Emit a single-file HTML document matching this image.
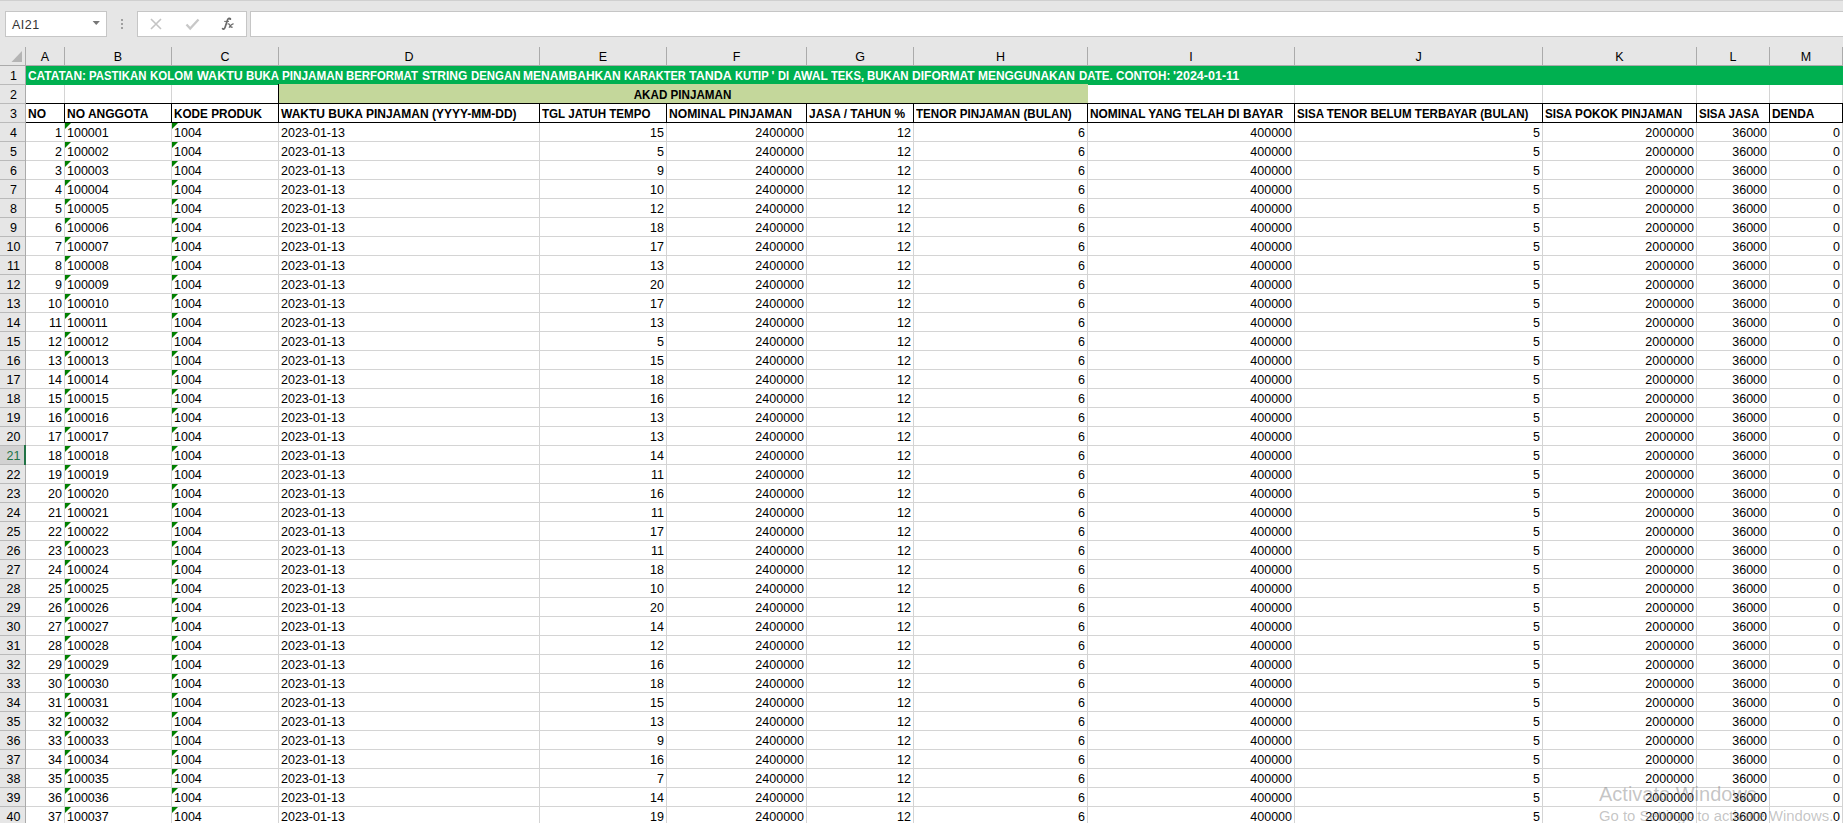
<!DOCTYPE html><html><head><meta charset="utf-8"><style>

*{margin:0;padding:0;box-sizing:border-box}
html,body{width:1843px;height:823px;overflow:hidden;background:#fff;font-family:"Liberation Sans",sans-serif;position:relative}
.a{position:absolute}
.t{position:absolute;white-space:pre;line-height:19px;height:19px;color:#000;font-size:12.5px}
.b{font-weight:bold;font-size:12.0px}
.r{text-align:right}
.c{text-align:center}
.vl{position:absolute;width:1px;background:#d4d4d4}
.hl{position:absolute;height:1px;background:#d4d4d4}
.tri{position:absolute;width:0;height:0;border-top:6px solid #008000;border-right:6px solid transparent}
.rh{position:absolute;left:1px;width:25px;height:19px;line-height:19px;text-align:center;font-size:12.5px;color:#000}
.ch{position:absolute;top:48px;height:18px;line-height:18px;text-align:center;font-size:12.5px;color:#000}

</style></head><body>
<div class="a" style="left:0;top:0;width:1843px;height:65px;background:#e6e6e6"></div>
<div class="a" style="left:0;top:0;width:1843px;height:1px;background:#d0d0d0"></div>
<div class="a" style="left:5px;top:11px;width:102px;height:26px;background:#fff;border:1px solid #c6c6c6"></div>
<div class="t" style="left:12px;top:16px;font-size:12.5px;color:#333;letter-spacing:0.5px">AI21</div>
<svg class="a" style="left:88px;top:16px" width="16" height="14"><path d="M4.6 4.9 L11.9 4.9 L8.25 9.1 Z" fill="#777"/></svg>
<div class="a" style="left:121px;top:19px;width:2px;height:2px;background:#a0a0a0"></div>
<div class="a" style="left:121px;top:23px;width:2px;height:2px;background:#a0a0a0"></div>
<div class="a" style="left:121px;top:27px;width:2px;height:2px;background:#a0a0a0"></div>
<div class="a" style="left:137px;top:11px;width:110px;height:26px;background:#fff;border:1px solid #c6c6c6"></div>
<svg class="a" style="left:150px;top:18px" width="12" height="12" viewBox="0 0 12 12"><path d="M1 1L11 11M11 1L1 11" stroke="#c4c4c4" stroke-width="1.6" fill="none"/></svg>
<svg class="a" style="left:185px;top:18px" width="15" height="13" viewBox="0 0 15 13"><path d="M1.5 6.5L5.2 10.5L13.5 1.5" stroke="#c8c8c8" stroke-width="2.3" fill="none"/></svg>
<svg class="a" style="left:218px;top:14px" width="20" height="20" viewBox="0 0 20 20"><path d="M12.4 5 C11.8 3.9, 10.2 4.1, 9.5 6 L7.1 13.3 C6.6 15, 5.4 15.5, 4.6 14.7" stroke="#6a6a6a" stroke-width="1.7" fill="none" stroke-linecap="round"/><circle cx="12.2" cy="5" r="0.9" fill="#6a6a6a"/><path d="M6.2 7.4 H11" stroke="#6a6a6a" stroke-width="1"/><path d="M9.6 10.3 C10.8 9.5, 11.4 9.9, 12 11.5 C12.5 13, 13 13.5, 14.6 13.2 M15.6 9.9 C14.2 9.8, 12.6 11.4, 11 13.6" stroke="#6a6a6a" stroke-width="1.3" fill="none"/></svg>
<div class="a" style="left:250px;top:11px;width:1600px;height:26px;background:#fff;border:1px solid #c6c6c6"></div>
<div class="a" style="left:0;top:65px;width:1843px;height:1px;background:#ababab"></div>
<svg class="a" style="left:0;top:45px" width="25" height="20"><path d="M11.5 17 L22 17 L22 6 Z" fill="#b4b4b4"/></svg>
<div class="a" style="left:25px;top:47px;width:1px;height:18px;background:#ababab"></div>
<div class="ch" style="left:26px;width:38px">A</div>
<div class="a" style="left:64px;top:47px;width:1px;height:18px;background:#ababab"></div>
<div class="ch" style="left:65px;width:106px">B</div>
<div class="a" style="left:171px;top:47px;width:1px;height:18px;background:#ababab"></div>
<div class="ch" style="left:172px;width:106px">C</div>
<div class="a" style="left:278px;top:47px;width:1px;height:18px;background:#ababab"></div>
<div class="ch" style="left:279px;width:260px">D</div>
<div class="a" style="left:539px;top:47px;width:1px;height:18px;background:#ababab"></div>
<div class="ch" style="left:540px;width:126px">E</div>
<div class="a" style="left:666px;top:47px;width:1px;height:18px;background:#ababab"></div>
<div class="ch" style="left:667px;width:139px">F</div>
<div class="a" style="left:806px;top:47px;width:1px;height:18px;background:#ababab"></div>
<div class="ch" style="left:807px;width:106px">G</div>
<div class="a" style="left:913px;top:47px;width:1px;height:18px;background:#ababab"></div>
<div class="ch" style="left:914px;width:173px">H</div>
<div class="a" style="left:1087px;top:47px;width:1px;height:18px;background:#ababab"></div>
<div class="ch" style="left:1088px;width:206px">I</div>
<div class="a" style="left:1294px;top:47px;width:1px;height:18px;background:#ababab"></div>
<div class="ch" style="left:1295px;width:247px">J</div>
<div class="a" style="left:1542px;top:47px;width:1px;height:18px;background:#ababab"></div>
<div class="ch" style="left:1543px;width:153px">K</div>
<div class="a" style="left:1696px;top:47px;width:1px;height:18px;background:#ababab"></div>
<div class="ch" style="left:1697px;width:72px">L</div>
<div class="a" style="left:1769px;top:47px;width:1px;height:18px;background:#ababab"></div>
<div class="ch" style="left:1770px;width:72px">M</div>
<div class="a" style="left:1842px;top:47px;width:1px;height:18px;background:#ababab"></div>
<div class="a" style="left:0;top:66px;width:25px;height:757px;background:#e6e6e6"></div>
<div class="a" style="left:25px;top:66px;width:1px;height:757px;background:#ababab"></div>
<div class="rh" style="top:67px;color:#000">1</div>
<div class="a" style="left:0;top:84px;width:25px;height:1px;background:#bababa"></div>
<div class="rh" style="top:86px;color:#000">2</div>
<div class="a" style="left:0;top:103px;width:25px;height:1px;background:#bababa"></div>
<div class="rh" style="top:105px;color:#000">3</div>
<div class="a" style="left:0;top:122px;width:25px;height:1px;background:#bababa"></div>
<div class="rh" style="top:124px;color:#000">4</div>
<div class="a" style="left:0;top:141px;width:25px;height:1px;background:#bababa"></div>
<div class="rh" style="top:143px;color:#000">5</div>
<div class="a" style="left:0;top:160px;width:25px;height:1px;background:#bababa"></div>
<div class="rh" style="top:162px;color:#000">6</div>
<div class="a" style="left:0;top:179px;width:25px;height:1px;background:#bababa"></div>
<div class="rh" style="top:181px;color:#000">7</div>
<div class="a" style="left:0;top:198px;width:25px;height:1px;background:#bababa"></div>
<div class="rh" style="top:200px;color:#000">8</div>
<div class="a" style="left:0;top:217px;width:25px;height:1px;background:#bababa"></div>
<div class="rh" style="top:219px;color:#000">9</div>
<div class="a" style="left:0;top:236px;width:25px;height:1px;background:#bababa"></div>
<div class="rh" style="top:238px;color:#000">10</div>
<div class="a" style="left:0;top:255px;width:25px;height:1px;background:#bababa"></div>
<div class="rh" style="top:257px;color:#000">11</div>
<div class="a" style="left:0;top:274px;width:25px;height:1px;background:#bababa"></div>
<div class="rh" style="top:276px;color:#000">12</div>
<div class="a" style="left:0;top:293px;width:25px;height:1px;background:#bababa"></div>
<div class="rh" style="top:295px;color:#000">13</div>
<div class="a" style="left:0;top:312px;width:25px;height:1px;background:#bababa"></div>
<div class="rh" style="top:314px;color:#000">14</div>
<div class="a" style="left:0;top:331px;width:25px;height:1px;background:#bababa"></div>
<div class="rh" style="top:333px;color:#000">15</div>
<div class="a" style="left:0;top:350px;width:25px;height:1px;background:#bababa"></div>
<div class="rh" style="top:352px;color:#000">16</div>
<div class="a" style="left:0;top:369px;width:25px;height:1px;background:#bababa"></div>
<div class="rh" style="top:371px;color:#000">17</div>
<div class="a" style="left:0;top:388px;width:25px;height:1px;background:#bababa"></div>
<div class="rh" style="top:390px;color:#000">18</div>
<div class="a" style="left:0;top:407px;width:25px;height:1px;background:#bababa"></div>
<div class="rh" style="top:409px;color:#000">19</div>
<div class="a" style="left:0;top:426px;width:25px;height:1px;background:#bababa"></div>
<div class="rh" style="top:428px;color:#000">20</div>
<div class="a" style="left:0;top:445px;width:25px;height:1px;background:#bababa"></div>
<div class="rh" style="top:447px;color:#217346">21</div>
<div class="a" style="left:0;top:464px;width:25px;height:1px;background:#bababa"></div>
<div class="rh" style="top:466px;color:#000">22</div>
<div class="a" style="left:0;top:483px;width:25px;height:1px;background:#bababa"></div>
<div class="rh" style="top:485px;color:#000">23</div>
<div class="a" style="left:0;top:502px;width:25px;height:1px;background:#bababa"></div>
<div class="rh" style="top:504px;color:#000">24</div>
<div class="a" style="left:0;top:521px;width:25px;height:1px;background:#bababa"></div>
<div class="rh" style="top:523px;color:#000">25</div>
<div class="a" style="left:0;top:540px;width:25px;height:1px;background:#bababa"></div>
<div class="rh" style="top:542px;color:#000">26</div>
<div class="a" style="left:0;top:559px;width:25px;height:1px;background:#bababa"></div>
<div class="rh" style="top:561px;color:#000">27</div>
<div class="a" style="left:0;top:578px;width:25px;height:1px;background:#bababa"></div>
<div class="rh" style="top:580px;color:#000">28</div>
<div class="a" style="left:0;top:597px;width:25px;height:1px;background:#bababa"></div>
<div class="rh" style="top:599px;color:#000">29</div>
<div class="a" style="left:0;top:616px;width:25px;height:1px;background:#bababa"></div>
<div class="rh" style="top:618px;color:#000">30</div>
<div class="a" style="left:0;top:635px;width:25px;height:1px;background:#bababa"></div>
<div class="rh" style="top:637px;color:#000">31</div>
<div class="a" style="left:0;top:654px;width:25px;height:1px;background:#bababa"></div>
<div class="rh" style="top:656px;color:#000">32</div>
<div class="a" style="left:0;top:673px;width:25px;height:1px;background:#bababa"></div>
<div class="rh" style="top:675px;color:#000">33</div>
<div class="a" style="left:0;top:692px;width:25px;height:1px;background:#bababa"></div>
<div class="rh" style="top:694px;color:#000">34</div>
<div class="a" style="left:0;top:711px;width:25px;height:1px;background:#bababa"></div>
<div class="rh" style="top:713px;color:#000">35</div>
<div class="a" style="left:0;top:730px;width:25px;height:1px;background:#bababa"></div>
<div class="rh" style="top:732px;color:#000">36</div>
<div class="a" style="left:0;top:749px;width:25px;height:1px;background:#bababa"></div>
<div class="rh" style="top:751px;color:#000">37</div>
<div class="a" style="left:0;top:768px;width:25px;height:1px;background:#bababa"></div>
<div class="rh" style="top:770px;color:#000">38</div>
<div class="a" style="left:0;top:787px;width:25px;height:1px;background:#bababa"></div>
<div class="rh" style="top:789px;color:#000">39</div>
<div class="a" style="left:0;top:806px;width:25px;height:1px;background:#bababa"></div>
<div class="rh" style="top:808px;color:#000">40</div>
<div class="a" style="left:0;top:825px;width:25px;height:1px;background:#bababa"></div>
<div class="a" style="left:0;top:446px;width:24px;height:18px;background:#d2d2d2"></div>
<div class="a" style="left:24px;top:445px;width:2px;height:20px;background:#217346"></div>
<div class="rh" style="top:447px;color:#217346">21</div>
<div class="hl" style="left:26px;top:84px;width:1817px"></div>
<div class="hl" style="left:26px;top:103px;width:1817px"></div>
<div class="hl" style="left:26px;top:122px;width:1817px"></div>
<div class="hl" style="left:26px;top:141px;width:1817px"></div>
<div class="hl" style="left:26px;top:160px;width:1817px"></div>
<div class="hl" style="left:26px;top:179px;width:1817px"></div>
<div class="hl" style="left:26px;top:198px;width:1817px"></div>
<div class="hl" style="left:26px;top:217px;width:1817px"></div>
<div class="hl" style="left:26px;top:236px;width:1817px"></div>
<div class="hl" style="left:26px;top:255px;width:1817px"></div>
<div class="hl" style="left:26px;top:274px;width:1817px"></div>
<div class="hl" style="left:26px;top:293px;width:1817px"></div>
<div class="hl" style="left:26px;top:312px;width:1817px"></div>
<div class="hl" style="left:26px;top:331px;width:1817px"></div>
<div class="hl" style="left:26px;top:350px;width:1817px"></div>
<div class="hl" style="left:26px;top:369px;width:1817px"></div>
<div class="hl" style="left:26px;top:388px;width:1817px"></div>
<div class="hl" style="left:26px;top:407px;width:1817px"></div>
<div class="hl" style="left:26px;top:426px;width:1817px"></div>
<div class="hl" style="left:26px;top:445px;width:1817px"></div>
<div class="hl" style="left:26px;top:464px;width:1817px"></div>
<div class="hl" style="left:26px;top:483px;width:1817px"></div>
<div class="hl" style="left:26px;top:502px;width:1817px"></div>
<div class="hl" style="left:26px;top:521px;width:1817px"></div>
<div class="hl" style="left:26px;top:540px;width:1817px"></div>
<div class="hl" style="left:26px;top:559px;width:1817px"></div>
<div class="hl" style="left:26px;top:578px;width:1817px"></div>
<div class="hl" style="left:26px;top:597px;width:1817px"></div>
<div class="hl" style="left:26px;top:616px;width:1817px"></div>
<div class="hl" style="left:26px;top:635px;width:1817px"></div>
<div class="hl" style="left:26px;top:654px;width:1817px"></div>
<div class="hl" style="left:26px;top:673px;width:1817px"></div>
<div class="hl" style="left:26px;top:692px;width:1817px"></div>
<div class="hl" style="left:26px;top:711px;width:1817px"></div>
<div class="hl" style="left:26px;top:730px;width:1817px"></div>
<div class="hl" style="left:26px;top:749px;width:1817px"></div>
<div class="hl" style="left:26px;top:768px;width:1817px"></div>
<div class="hl" style="left:26px;top:787px;width:1817px"></div>
<div class="hl" style="left:26px;top:806px;width:1817px"></div>
<div class="hl" style="left:26px;top:825px;width:1817px"></div>
<div class="vl" style="left:64px;top:66px;height:757px"></div>
<div class="vl" style="left:171px;top:66px;height:757px"></div>
<div class="vl" style="left:278px;top:66px;height:757px"></div>
<div class="vl" style="left:539px;top:66px;height:757px"></div>
<div class="vl" style="left:666px;top:66px;height:757px"></div>
<div class="vl" style="left:806px;top:66px;height:757px"></div>
<div class="vl" style="left:913px;top:66px;height:757px"></div>
<div class="vl" style="left:1087px;top:66px;height:757px"></div>
<div class="vl" style="left:1294px;top:66px;height:757px"></div>
<div class="vl" style="left:1542px;top:66px;height:757px"></div>
<div class="vl" style="left:1696px;top:66px;height:757px"></div>
<div class="vl" style="left:1769px;top:66px;height:757px"></div>
<div class="vl" style="left:1842px;top:66px;height:757px"></div>
<div class="a" style="left:26px;top:66px;width:1817px;height:19px;background:#00b050"></div>
<div class="t b" style="left:28.0px;top:67px;color:#fff;transform:scaleX(0.994);transform-origin:0 0">CATATAN:</div>
<div class="t b" style="left:89.2px;top:67px;color:#fff;transform:scaleX(0.949);transform-origin:0 0">PASTIKAN</div>
<div class="t b" style="left:150.0px;top:67px;color:#fff;transform:scaleX(0.958);transform-origin:0 0">KOLOM</div>
<div class="t b" style="left:196.9px;top:67px;color:#fff;transform:scaleX(1.043);transform-origin:0 0">WAKTU</div>
<div class="t b" style="left:245.5px;top:67px;color:#fff;transform:scaleX(0.952);transform-origin:0 0">BUKA</div>
<div class="t b" style="left:281.9px;top:67px;color:#fff;transform:scaleX(0.975);transform-origin:0 0">PINJAMAN</div>
<div class="t b" style="left:346.4px;top:67px;color:#fff;transform:scaleX(0.949);transform-origin:0 0">BERFORMAT</div>
<div class="t b" style="left:422.0px;top:67px;color:#fff;transform:scaleX(1.001);transform-origin:0 0">STRING</div>
<div class="t b" style="left:470.5px;top:67px;color:#fff;transform:scaleX(0.95);transform-origin:0 0">DENGAN</div>
<div class="t b" style="left:523.3px;top:67px;color:#fff;transform:scaleX(1.004);transform-origin:0 0">MENAMBAHKAN</div>
<div class="t b" style="left:624.4px;top:67px;color:#fff;transform:scaleX(0.918);transform-origin:0 0">KARAKTER</div>
<div class="t b" style="left:688.9px;top:67px;color:#fff;transform:scaleX(1.041);transform-origin:0 0">TANDA</div>
<div class="t b" style="left:734.5px;top:67px;color:#fff;transform:scaleX(0.936);transform-origin:0 0">KUTIP</div>
<div class="t b" style="left:771.5px;top:67px;color:#fff;transform:scaleX(1.0);transform-origin:0 0">'</div>
<div class="t b" style="left:778.2px;top:67px;color:#fff;transform:scaleX(0.925);transform-origin:0 0">DI</div>
<div class="t b" style="left:793.4px;top:67px;color:#fff;transform:scaleX(1.004);transform-origin:0 0">AWAL</div>
<div class="t b" style="left:831.4px;top:67px;color:#fff;transform:scaleX(0.934);transform-origin:0 0">TEKS,</div>
<div class="t b" style="left:867.3px;top:67px;color:#fff;transform:scaleX(0.957);transform-origin:0 0">BUKAN</div>
<div class="t b" style="left:912.2px;top:67px;color:#fff;transform:scaleX(1.004);transform-origin:0 0">DIFORMAT</div>
<div class="t b" style="left:978.3px;top:67px;color:#fff;transform:scaleX(0.996);transform-origin:0 0">MENGGUNAKAN</div>
<div class="t b" style="left:1078.7px;top:67px;color:#fff;transform:scaleX(0.96);transform-origin:0 0">DATE.</div>
<div class="t b" style="left:1116.1px;top:67px;color:#fff;transform:scaleX(0.973);transform-origin:0 0">CONTOH:</div>
<div class="t b" style="left:1173.4px;top:67px;color:#fff;transform:scaleX(1.043);transform-origin:0 0">'2024-01-11</div>
<div class="a" style="left:279px;top:84px;width:809px;height:19px;background:#c4d79b"></div>
<div class="a" style="left:278px;top:84px;width:1px;height:19px;background:#000"></div>
<div class="t b c" style="left:278px;top:86px;width:809px;transform:scaleX(0.97)">AKAD PINJAMAN</div>
<div class="a" style="left:26px;top:103px;width:1817px;height:1px;background:#000"></div>
<div class="a" style="left:26px;top:122px;width:1817px;height:1px;background:#000"></div>
<div class="a" style="left:64px;top:103px;width:1px;height:20px;background:#000"></div>
<div class="a" style="left:171px;top:103px;width:1px;height:20px;background:#000"></div>
<div class="a" style="left:278px;top:103px;width:1px;height:20px;background:#000"></div>
<div class="a" style="left:539px;top:103px;width:1px;height:20px;background:#000"></div>
<div class="a" style="left:666px;top:103px;width:1px;height:20px;background:#000"></div>
<div class="a" style="left:806px;top:103px;width:1px;height:20px;background:#000"></div>
<div class="a" style="left:913px;top:103px;width:1px;height:20px;background:#000"></div>
<div class="a" style="left:1087px;top:103px;width:1px;height:20px;background:#000"></div>
<div class="a" style="left:1294px;top:103px;width:1px;height:20px;background:#000"></div>
<div class="a" style="left:1542px;top:103px;width:1px;height:20px;background:#000"></div>
<div class="a" style="left:1696px;top:103px;width:1px;height:20px;background:#000"></div>
<div class="a" style="left:1769px;top:103px;width:1px;height:20px;background:#000"></div>
<div class="a" style="left:1842px;top:103px;width:1px;height:20px;background:#000"></div>
<div class="t b" style="left:28px;top:105px;transform:scaleX(1.0);transform-origin:0 0">NO</div>
<div class="t b" style="left:67px;top:105px;transform:scaleX(1.0);transform-origin:0 0">NO ANGGOTA</div>
<div class="t b" style="left:174px;top:105px;transform:scaleX(0.978);transform-origin:0 0">KODE PRODUK</div>
<div class="t b" style="left:281px;top:105px;transform:scaleX(1.0);transform-origin:0 0">WAKTU BUKA PINJAMAN (YYYY-MM-DD)</div>
<div class="t b" style="left:542px;top:105px;transform:scaleX(0.967);transform-origin:0 0">TGL JATUH TEMPO</div>
<div class="t b" style="left:669px;top:105px;transform:scaleX(1.01);transform-origin:0 0">NOMINAL PINJAMAN</div>
<div class="t b" style="left:809px;top:105px;transform:scaleX(0.993);transform-origin:0 0">JASA / TAHUN %</div>
<div class="t b" style="left:916px;top:105px;transform:scaleX(0.965);transform-origin:0 0">TENOR PINJAMAN (BULAN)</div>
<div class="t b" style="left:1090px;top:105px;transform:scaleX(0.99);transform-origin:0 0">NOMINAL YANG TELAH DI BAYAR</div>
<div class="t b" style="left:1297px;top:105px;transform:scaleX(0.964);transform-origin:0 0">SISA TENOR BELUM TERBAYAR (BULAN)</div>
<div class="t b" style="left:1545px;top:105px;transform:scaleX(0.974);transform-origin:0 0">SISA POKOK PINJAMAN</div>
<div class="t b" style="left:1699px;top:105px;transform:scaleX(0.957);transform-origin:0 0">SISA JASA</div>
<div class="t b" style="left:1772px;top:105px;transform:scaleX(0.995);transform-origin:0 0">DENDA</div>
<div class="t r" style="left:26px;width:36px;top:124px">1</div>
<div class="t" style="left:67px;top:124px">100001</div>
<div class="t" style="left:174px;top:124px">1004</div>
<div class="t" style="left:281px;top:124px">2023-01-13</div>
<div class="t r" style="left:540px;width:124px;top:124px">15</div>
<div class="t r" style="left:667px;width:137px;top:124px">2400000</div>
<div class="t r" style="left:807px;width:104px;top:124px">12</div>
<div class="t r" style="left:914px;width:171px;top:124px">6</div>
<div class="t r" style="left:1088px;width:204px;top:124px">400000</div>
<div class="t r" style="left:1295px;width:245px;top:124px">5</div>
<div class="t r" style="left:1543px;width:151px;top:124px">2000000</div>
<div class="t r" style="left:1697px;width:70px;top:124px">36000</div>
<div class="t r" style="left:1770px;width:70px;top:124px">0</div>
<div class="tri" style="left:65px;top:123px"></div>
<div class="tri" style="left:172px;top:123px"></div>
<div class="t r" style="left:26px;width:36px;top:143px">2</div>
<div class="t" style="left:67px;top:143px">100002</div>
<div class="t" style="left:174px;top:143px">1004</div>
<div class="t" style="left:281px;top:143px">2023-01-13</div>
<div class="t r" style="left:540px;width:124px;top:143px">5</div>
<div class="t r" style="left:667px;width:137px;top:143px">2400000</div>
<div class="t r" style="left:807px;width:104px;top:143px">12</div>
<div class="t r" style="left:914px;width:171px;top:143px">6</div>
<div class="t r" style="left:1088px;width:204px;top:143px">400000</div>
<div class="t r" style="left:1295px;width:245px;top:143px">5</div>
<div class="t r" style="left:1543px;width:151px;top:143px">2000000</div>
<div class="t r" style="left:1697px;width:70px;top:143px">36000</div>
<div class="t r" style="left:1770px;width:70px;top:143px">0</div>
<div class="tri" style="left:65px;top:142px"></div>
<div class="tri" style="left:172px;top:142px"></div>
<div class="t r" style="left:26px;width:36px;top:162px">3</div>
<div class="t" style="left:67px;top:162px">100003</div>
<div class="t" style="left:174px;top:162px">1004</div>
<div class="t" style="left:281px;top:162px">2023-01-13</div>
<div class="t r" style="left:540px;width:124px;top:162px">9</div>
<div class="t r" style="left:667px;width:137px;top:162px">2400000</div>
<div class="t r" style="left:807px;width:104px;top:162px">12</div>
<div class="t r" style="left:914px;width:171px;top:162px">6</div>
<div class="t r" style="left:1088px;width:204px;top:162px">400000</div>
<div class="t r" style="left:1295px;width:245px;top:162px">5</div>
<div class="t r" style="left:1543px;width:151px;top:162px">2000000</div>
<div class="t r" style="left:1697px;width:70px;top:162px">36000</div>
<div class="t r" style="left:1770px;width:70px;top:162px">0</div>
<div class="tri" style="left:65px;top:161px"></div>
<div class="tri" style="left:172px;top:161px"></div>
<div class="t r" style="left:26px;width:36px;top:181px">4</div>
<div class="t" style="left:67px;top:181px">100004</div>
<div class="t" style="left:174px;top:181px">1004</div>
<div class="t" style="left:281px;top:181px">2023-01-13</div>
<div class="t r" style="left:540px;width:124px;top:181px">10</div>
<div class="t r" style="left:667px;width:137px;top:181px">2400000</div>
<div class="t r" style="left:807px;width:104px;top:181px">12</div>
<div class="t r" style="left:914px;width:171px;top:181px">6</div>
<div class="t r" style="left:1088px;width:204px;top:181px">400000</div>
<div class="t r" style="left:1295px;width:245px;top:181px">5</div>
<div class="t r" style="left:1543px;width:151px;top:181px">2000000</div>
<div class="t r" style="left:1697px;width:70px;top:181px">36000</div>
<div class="t r" style="left:1770px;width:70px;top:181px">0</div>
<div class="tri" style="left:65px;top:180px"></div>
<div class="tri" style="left:172px;top:180px"></div>
<div class="t r" style="left:26px;width:36px;top:200px">5</div>
<div class="t" style="left:67px;top:200px">100005</div>
<div class="t" style="left:174px;top:200px">1004</div>
<div class="t" style="left:281px;top:200px">2023-01-13</div>
<div class="t r" style="left:540px;width:124px;top:200px">12</div>
<div class="t r" style="left:667px;width:137px;top:200px">2400000</div>
<div class="t r" style="left:807px;width:104px;top:200px">12</div>
<div class="t r" style="left:914px;width:171px;top:200px">6</div>
<div class="t r" style="left:1088px;width:204px;top:200px">400000</div>
<div class="t r" style="left:1295px;width:245px;top:200px">5</div>
<div class="t r" style="left:1543px;width:151px;top:200px">2000000</div>
<div class="t r" style="left:1697px;width:70px;top:200px">36000</div>
<div class="t r" style="left:1770px;width:70px;top:200px">0</div>
<div class="tri" style="left:65px;top:199px"></div>
<div class="tri" style="left:172px;top:199px"></div>
<div class="t r" style="left:26px;width:36px;top:219px">6</div>
<div class="t" style="left:67px;top:219px">100006</div>
<div class="t" style="left:174px;top:219px">1004</div>
<div class="t" style="left:281px;top:219px">2023-01-13</div>
<div class="t r" style="left:540px;width:124px;top:219px">18</div>
<div class="t r" style="left:667px;width:137px;top:219px">2400000</div>
<div class="t r" style="left:807px;width:104px;top:219px">12</div>
<div class="t r" style="left:914px;width:171px;top:219px">6</div>
<div class="t r" style="left:1088px;width:204px;top:219px">400000</div>
<div class="t r" style="left:1295px;width:245px;top:219px">5</div>
<div class="t r" style="left:1543px;width:151px;top:219px">2000000</div>
<div class="t r" style="left:1697px;width:70px;top:219px">36000</div>
<div class="t r" style="left:1770px;width:70px;top:219px">0</div>
<div class="tri" style="left:65px;top:218px"></div>
<div class="tri" style="left:172px;top:218px"></div>
<div class="t r" style="left:26px;width:36px;top:238px">7</div>
<div class="t" style="left:67px;top:238px">100007</div>
<div class="t" style="left:174px;top:238px">1004</div>
<div class="t" style="left:281px;top:238px">2023-01-13</div>
<div class="t r" style="left:540px;width:124px;top:238px">17</div>
<div class="t r" style="left:667px;width:137px;top:238px">2400000</div>
<div class="t r" style="left:807px;width:104px;top:238px">12</div>
<div class="t r" style="left:914px;width:171px;top:238px">6</div>
<div class="t r" style="left:1088px;width:204px;top:238px">400000</div>
<div class="t r" style="left:1295px;width:245px;top:238px">5</div>
<div class="t r" style="left:1543px;width:151px;top:238px">2000000</div>
<div class="t r" style="left:1697px;width:70px;top:238px">36000</div>
<div class="t r" style="left:1770px;width:70px;top:238px">0</div>
<div class="tri" style="left:65px;top:237px"></div>
<div class="tri" style="left:172px;top:237px"></div>
<div class="t r" style="left:26px;width:36px;top:257px">8</div>
<div class="t" style="left:67px;top:257px">100008</div>
<div class="t" style="left:174px;top:257px">1004</div>
<div class="t" style="left:281px;top:257px">2023-01-13</div>
<div class="t r" style="left:540px;width:124px;top:257px">13</div>
<div class="t r" style="left:667px;width:137px;top:257px">2400000</div>
<div class="t r" style="left:807px;width:104px;top:257px">12</div>
<div class="t r" style="left:914px;width:171px;top:257px">6</div>
<div class="t r" style="left:1088px;width:204px;top:257px">400000</div>
<div class="t r" style="left:1295px;width:245px;top:257px">5</div>
<div class="t r" style="left:1543px;width:151px;top:257px">2000000</div>
<div class="t r" style="left:1697px;width:70px;top:257px">36000</div>
<div class="t r" style="left:1770px;width:70px;top:257px">0</div>
<div class="tri" style="left:65px;top:256px"></div>
<div class="tri" style="left:172px;top:256px"></div>
<div class="t r" style="left:26px;width:36px;top:276px">9</div>
<div class="t" style="left:67px;top:276px">100009</div>
<div class="t" style="left:174px;top:276px">1004</div>
<div class="t" style="left:281px;top:276px">2023-01-13</div>
<div class="t r" style="left:540px;width:124px;top:276px">20</div>
<div class="t r" style="left:667px;width:137px;top:276px">2400000</div>
<div class="t r" style="left:807px;width:104px;top:276px">12</div>
<div class="t r" style="left:914px;width:171px;top:276px">6</div>
<div class="t r" style="left:1088px;width:204px;top:276px">400000</div>
<div class="t r" style="left:1295px;width:245px;top:276px">5</div>
<div class="t r" style="left:1543px;width:151px;top:276px">2000000</div>
<div class="t r" style="left:1697px;width:70px;top:276px">36000</div>
<div class="t r" style="left:1770px;width:70px;top:276px">0</div>
<div class="tri" style="left:65px;top:275px"></div>
<div class="tri" style="left:172px;top:275px"></div>
<div class="t r" style="left:26px;width:36px;top:295px">10</div>
<div class="t" style="left:67px;top:295px">100010</div>
<div class="t" style="left:174px;top:295px">1004</div>
<div class="t" style="left:281px;top:295px">2023-01-13</div>
<div class="t r" style="left:540px;width:124px;top:295px">17</div>
<div class="t r" style="left:667px;width:137px;top:295px">2400000</div>
<div class="t r" style="left:807px;width:104px;top:295px">12</div>
<div class="t r" style="left:914px;width:171px;top:295px">6</div>
<div class="t r" style="left:1088px;width:204px;top:295px">400000</div>
<div class="t r" style="left:1295px;width:245px;top:295px">5</div>
<div class="t r" style="left:1543px;width:151px;top:295px">2000000</div>
<div class="t r" style="left:1697px;width:70px;top:295px">36000</div>
<div class="t r" style="left:1770px;width:70px;top:295px">0</div>
<div class="tri" style="left:65px;top:294px"></div>
<div class="tri" style="left:172px;top:294px"></div>
<div class="t r" style="left:26px;width:36px;top:314px">11</div>
<div class="t" style="left:67px;top:314px">100011</div>
<div class="t" style="left:174px;top:314px">1004</div>
<div class="t" style="left:281px;top:314px">2023-01-13</div>
<div class="t r" style="left:540px;width:124px;top:314px">13</div>
<div class="t r" style="left:667px;width:137px;top:314px">2400000</div>
<div class="t r" style="left:807px;width:104px;top:314px">12</div>
<div class="t r" style="left:914px;width:171px;top:314px">6</div>
<div class="t r" style="left:1088px;width:204px;top:314px">400000</div>
<div class="t r" style="left:1295px;width:245px;top:314px">5</div>
<div class="t r" style="left:1543px;width:151px;top:314px">2000000</div>
<div class="t r" style="left:1697px;width:70px;top:314px">36000</div>
<div class="t r" style="left:1770px;width:70px;top:314px">0</div>
<div class="tri" style="left:65px;top:313px"></div>
<div class="tri" style="left:172px;top:313px"></div>
<div class="t r" style="left:26px;width:36px;top:333px">12</div>
<div class="t" style="left:67px;top:333px">100012</div>
<div class="t" style="left:174px;top:333px">1004</div>
<div class="t" style="left:281px;top:333px">2023-01-13</div>
<div class="t r" style="left:540px;width:124px;top:333px">5</div>
<div class="t r" style="left:667px;width:137px;top:333px">2400000</div>
<div class="t r" style="left:807px;width:104px;top:333px">12</div>
<div class="t r" style="left:914px;width:171px;top:333px">6</div>
<div class="t r" style="left:1088px;width:204px;top:333px">400000</div>
<div class="t r" style="left:1295px;width:245px;top:333px">5</div>
<div class="t r" style="left:1543px;width:151px;top:333px">2000000</div>
<div class="t r" style="left:1697px;width:70px;top:333px">36000</div>
<div class="t r" style="left:1770px;width:70px;top:333px">0</div>
<div class="tri" style="left:65px;top:332px"></div>
<div class="tri" style="left:172px;top:332px"></div>
<div class="t r" style="left:26px;width:36px;top:352px">13</div>
<div class="t" style="left:67px;top:352px">100013</div>
<div class="t" style="left:174px;top:352px">1004</div>
<div class="t" style="left:281px;top:352px">2023-01-13</div>
<div class="t r" style="left:540px;width:124px;top:352px">15</div>
<div class="t r" style="left:667px;width:137px;top:352px">2400000</div>
<div class="t r" style="left:807px;width:104px;top:352px">12</div>
<div class="t r" style="left:914px;width:171px;top:352px">6</div>
<div class="t r" style="left:1088px;width:204px;top:352px">400000</div>
<div class="t r" style="left:1295px;width:245px;top:352px">5</div>
<div class="t r" style="left:1543px;width:151px;top:352px">2000000</div>
<div class="t r" style="left:1697px;width:70px;top:352px">36000</div>
<div class="t r" style="left:1770px;width:70px;top:352px">0</div>
<div class="tri" style="left:65px;top:351px"></div>
<div class="tri" style="left:172px;top:351px"></div>
<div class="t r" style="left:26px;width:36px;top:371px">14</div>
<div class="t" style="left:67px;top:371px">100014</div>
<div class="t" style="left:174px;top:371px">1004</div>
<div class="t" style="left:281px;top:371px">2023-01-13</div>
<div class="t r" style="left:540px;width:124px;top:371px">18</div>
<div class="t r" style="left:667px;width:137px;top:371px">2400000</div>
<div class="t r" style="left:807px;width:104px;top:371px">12</div>
<div class="t r" style="left:914px;width:171px;top:371px">6</div>
<div class="t r" style="left:1088px;width:204px;top:371px">400000</div>
<div class="t r" style="left:1295px;width:245px;top:371px">5</div>
<div class="t r" style="left:1543px;width:151px;top:371px">2000000</div>
<div class="t r" style="left:1697px;width:70px;top:371px">36000</div>
<div class="t r" style="left:1770px;width:70px;top:371px">0</div>
<div class="tri" style="left:65px;top:370px"></div>
<div class="tri" style="left:172px;top:370px"></div>
<div class="t r" style="left:26px;width:36px;top:390px">15</div>
<div class="t" style="left:67px;top:390px">100015</div>
<div class="t" style="left:174px;top:390px">1004</div>
<div class="t" style="left:281px;top:390px">2023-01-13</div>
<div class="t r" style="left:540px;width:124px;top:390px">16</div>
<div class="t r" style="left:667px;width:137px;top:390px">2400000</div>
<div class="t r" style="left:807px;width:104px;top:390px">12</div>
<div class="t r" style="left:914px;width:171px;top:390px">6</div>
<div class="t r" style="left:1088px;width:204px;top:390px">400000</div>
<div class="t r" style="left:1295px;width:245px;top:390px">5</div>
<div class="t r" style="left:1543px;width:151px;top:390px">2000000</div>
<div class="t r" style="left:1697px;width:70px;top:390px">36000</div>
<div class="t r" style="left:1770px;width:70px;top:390px">0</div>
<div class="tri" style="left:65px;top:389px"></div>
<div class="tri" style="left:172px;top:389px"></div>
<div class="t r" style="left:26px;width:36px;top:409px">16</div>
<div class="t" style="left:67px;top:409px">100016</div>
<div class="t" style="left:174px;top:409px">1004</div>
<div class="t" style="left:281px;top:409px">2023-01-13</div>
<div class="t r" style="left:540px;width:124px;top:409px">13</div>
<div class="t r" style="left:667px;width:137px;top:409px">2400000</div>
<div class="t r" style="left:807px;width:104px;top:409px">12</div>
<div class="t r" style="left:914px;width:171px;top:409px">6</div>
<div class="t r" style="left:1088px;width:204px;top:409px">400000</div>
<div class="t r" style="left:1295px;width:245px;top:409px">5</div>
<div class="t r" style="left:1543px;width:151px;top:409px">2000000</div>
<div class="t r" style="left:1697px;width:70px;top:409px">36000</div>
<div class="t r" style="left:1770px;width:70px;top:409px">0</div>
<div class="tri" style="left:65px;top:408px"></div>
<div class="tri" style="left:172px;top:408px"></div>
<div class="t r" style="left:26px;width:36px;top:428px">17</div>
<div class="t" style="left:67px;top:428px">100017</div>
<div class="t" style="left:174px;top:428px">1004</div>
<div class="t" style="left:281px;top:428px">2023-01-13</div>
<div class="t r" style="left:540px;width:124px;top:428px">13</div>
<div class="t r" style="left:667px;width:137px;top:428px">2400000</div>
<div class="t r" style="left:807px;width:104px;top:428px">12</div>
<div class="t r" style="left:914px;width:171px;top:428px">6</div>
<div class="t r" style="left:1088px;width:204px;top:428px">400000</div>
<div class="t r" style="left:1295px;width:245px;top:428px">5</div>
<div class="t r" style="left:1543px;width:151px;top:428px">2000000</div>
<div class="t r" style="left:1697px;width:70px;top:428px">36000</div>
<div class="t r" style="left:1770px;width:70px;top:428px">0</div>
<div class="tri" style="left:65px;top:427px"></div>
<div class="tri" style="left:172px;top:427px"></div>
<div class="t r" style="left:26px;width:36px;top:447px">18</div>
<div class="t" style="left:67px;top:447px">100018</div>
<div class="t" style="left:174px;top:447px">1004</div>
<div class="t" style="left:281px;top:447px">2023-01-13</div>
<div class="t r" style="left:540px;width:124px;top:447px">14</div>
<div class="t r" style="left:667px;width:137px;top:447px">2400000</div>
<div class="t r" style="left:807px;width:104px;top:447px">12</div>
<div class="t r" style="left:914px;width:171px;top:447px">6</div>
<div class="t r" style="left:1088px;width:204px;top:447px">400000</div>
<div class="t r" style="left:1295px;width:245px;top:447px">5</div>
<div class="t r" style="left:1543px;width:151px;top:447px">2000000</div>
<div class="t r" style="left:1697px;width:70px;top:447px">36000</div>
<div class="t r" style="left:1770px;width:70px;top:447px">0</div>
<div class="tri" style="left:65px;top:446px"></div>
<div class="tri" style="left:172px;top:446px"></div>
<div class="t r" style="left:26px;width:36px;top:466px">19</div>
<div class="t" style="left:67px;top:466px">100019</div>
<div class="t" style="left:174px;top:466px">1004</div>
<div class="t" style="left:281px;top:466px">2023-01-13</div>
<div class="t r" style="left:540px;width:124px;top:466px">11</div>
<div class="t r" style="left:667px;width:137px;top:466px">2400000</div>
<div class="t r" style="left:807px;width:104px;top:466px">12</div>
<div class="t r" style="left:914px;width:171px;top:466px">6</div>
<div class="t r" style="left:1088px;width:204px;top:466px">400000</div>
<div class="t r" style="left:1295px;width:245px;top:466px">5</div>
<div class="t r" style="left:1543px;width:151px;top:466px">2000000</div>
<div class="t r" style="left:1697px;width:70px;top:466px">36000</div>
<div class="t r" style="left:1770px;width:70px;top:466px">0</div>
<div class="tri" style="left:65px;top:465px"></div>
<div class="tri" style="left:172px;top:465px"></div>
<div class="t r" style="left:26px;width:36px;top:485px">20</div>
<div class="t" style="left:67px;top:485px">100020</div>
<div class="t" style="left:174px;top:485px">1004</div>
<div class="t" style="left:281px;top:485px">2023-01-13</div>
<div class="t r" style="left:540px;width:124px;top:485px">16</div>
<div class="t r" style="left:667px;width:137px;top:485px">2400000</div>
<div class="t r" style="left:807px;width:104px;top:485px">12</div>
<div class="t r" style="left:914px;width:171px;top:485px">6</div>
<div class="t r" style="left:1088px;width:204px;top:485px">400000</div>
<div class="t r" style="left:1295px;width:245px;top:485px">5</div>
<div class="t r" style="left:1543px;width:151px;top:485px">2000000</div>
<div class="t r" style="left:1697px;width:70px;top:485px">36000</div>
<div class="t r" style="left:1770px;width:70px;top:485px">0</div>
<div class="tri" style="left:65px;top:484px"></div>
<div class="tri" style="left:172px;top:484px"></div>
<div class="t r" style="left:26px;width:36px;top:504px">21</div>
<div class="t" style="left:67px;top:504px">100021</div>
<div class="t" style="left:174px;top:504px">1004</div>
<div class="t" style="left:281px;top:504px">2023-01-13</div>
<div class="t r" style="left:540px;width:124px;top:504px">11</div>
<div class="t r" style="left:667px;width:137px;top:504px">2400000</div>
<div class="t r" style="left:807px;width:104px;top:504px">12</div>
<div class="t r" style="left:914px;width:171px;top:504px">6</div>
<div class="t r" style="left:1088px;width:204px;top:504px">400000</div>
<div class="t r" style="left:1295px;width:245px;top:504px">5</div>
<div class="t r" style="left:1543px;width:151px;top:504px">2000000</div>
<div class="t r" style="left:1697px;width:70px;top:504px">36000</div>
<div class="t r" style="left:1770px;width:70px;top:504px">0</div>
<div class="tri" style="left:65px;top:503px"></div>
<div class="tri" style="left:172px;top:503px"></div>
<div class="t r" style="left:26px;width:36px;top:523px">22</div>
<div class="t" style="left:67px;top:523px">100022</div>
<div class="t" style="left:174px;top:523px">1004</div>
<div class="t" style="left:281px;top:523px">2023-01-13</div>
<div class="t r" style="left:540px;width:124px;top:523px">17</div>
<div class="t r" style="left:667px;width:137px;top:523px">2400000</div>
<div class="t r" style="left:807px;width:104px;top:523px">12</div>
<div class="t r" style="left:914px;width:171px;top:523px">6</div>
<div class="t r" style="left:1088px;width:204px;top:523px">400000</div>
<div class="t r" style="left:1295px;width:245px;top:523px">5</div>
<div class="t r" style="left:1543px;width:151px;top:523px">2000000</div>
<div class="t r" style="left:1697px;width:70px;top:523px">36000</div>
<div class="t r" style="left:1770px;width:70px;top:523px">0</div>
<div class="tri" style="left:65px;top:522px"></div>
<div class="tri" style="left:172px;top:522px"></div>
<div class="t r" style="left:26px;width:36px;top:542px">23</div>
<div class="t" style="left:67px;top:542px">100023</div>
<div class="t" style="left:174px;top:542px">1004</div>
<div class="t" style="left:281px;top:542px">2023-01-13</div>
<div class="t r" style="left:540px;width:124px;top:542px">11</div>
<div class="t r" style="left:667px;width:137px;top:542px">2400000</div>
<div class="t r" style="left:807px;width:104px;top:542px">12</div>
<div class="t r" style="left:914px;width:171px;top:542px">6</div>
<div class="t r" style="left:1088px;width:204px;top:542px">400000</div>
<div class="t r" style="left:1295px;width:245px;top:542px">5</div>
<div class="t r" style="left:1543px;width:151px;top:542px">2000000</div>
<div class="t r" style="left:1697px;width:70px;top:542px">36000</div>
<div class="t r" style="left:1770px;width:70px;top:542px">0</div>
<div class="tri" style="left:65px;top:541px"></div>
<div class="tri" style="left:172px;top:541px"></div>
<div class="t r" style="left:26px;width:36px;top:561px">24</div>
<div class="t" style="left:67px;top:561px">100024</div>
<div class="t" style="left:174px;top:561px">1004</div>
<div class="t" style="left:281px;top:561px">2023-01-13</div>
<div class="t r" style="left:540px;width:124px;top:561px">18</div>
<div class="t r" style="left:667px;width:137px;top:561px">2400000</div>
<div class="t r" style="left:807px;width:104px;top:561px">12</div>
<div class="t r" style="left:914px;width:171px;top:561px">6</div>
<div class="t r" style="left:1088px;width:204px;top:561px">400000</div>
<div class="t r" style="left:1295px;width:245px;top:561px">5</div>
<div class="t r" style="left:1543px;width:151px;top:561px">2000000</div>
<div class="t r" style="left:1697px;width:70px;top:561px">36000</div>
<div class="t r" style="left:1770px;width:70px;top:561px">0</div>
<div class="tri" style="left:65px;top:560px"></div>
<div class="tri" style="left:172px;top:560px"></div>
<div class="t r" style="left:26px;width:36px;top:580px">25</div>
<div class="t" style="left:67px;top:580px">100025</div>
<div class="t" style="left:174px;top:580px">1004</div>
<div class="t" style="left:281px;top:580px">2023-01-13</div>
<div class="t r" style="left:540px;width:124px;top:580px">10</div>
<div class="t r" style="left:667px;width:137px;top:580px">2400000</div>
<div class="t r" style="left:807px;width:104px;top:580px">12</div>
<div class="t r" style="left:914px;width:171px;top:580px">6</div>
<div class="t r" style="left:1088px;width:204px;top:580px">400000</div>
<div class="t r" style="left:1295px;width:245px;top:580px">5</div>
<div class="t r" style="left:1543px;width:151px;top:580px">2000000</div>
<div class="t r" style="left:1697px;width:70px;top:580px">36000</div>
<div class="t r" style="left:1770px;width:70px;top:580px">0</div>
<div class="tri" style="left:65px;top:579px"></div>
<div class="tri" style="left:172px;top:579px"></div>
<div class="t r" style="left:26px;width:36px;top:599px">26</div>
<div class="t" style="left:67px;top:599px">100026</div>
<div class="t" style="left:174px;top:599px">1004</div>
<div class="t" style="left:281px;top:599px">2023-01-13</div>
<div class="t r" style="left:540px;width:124px;top:599px">20</div>
<div class="t r" style="left:667px;width:137px;top:599px">2400000</div>
<div class="t r" style="left:807px;width:104px;top:599px">12</div>
<div class="t r" style="left:914px;width:171px;top:599px">6</div>
<div class="t r" style="left:1088px;width:204px;top:599px">400000</div>
<div class="t r" style="left:1295px;width:245px;top:599px">5</div>
<div class="t r" style="left:1543px;width:151px;top:599px">2000000</div>
<div class="t r" style="left:1697px;width:70px;top:599px">36000</div>
<div class="t r" style="left:1770px;width:70px;top:599px">0</div>
<div class="tri" style="left:65px;top:598px"></div>
<div class="tri" style="left:172px;top:598px"></div>
<div class="t r" style="left:26px;width:36px;top:618px">27</div>
<div class="t" style="left:67px;top:618px">100027</div>
<div class="t" style="left:174px;top:618px">1004</div>
<div class="t" style="left:281px;top:618px">2023-01-13</div>
<div class="t r" style="left:540px;width:124px;top:618px">14</div>
<div class="t r" style="left:667px;width:137px;top:618px">2400000</div>
<div class="t r" style="left:807px;width:104px;top:618px">12</div>
<div class="t r" style="left:914px;width:171px;top:618px">6</div>
<div class="t r" style="left:1088px;width:204px;top:618px">400000</div>
<div class="t r" style="left:1295px;width:245px;top:618px">5</div>
<div class="t r" style="left:1543px;width:151px;top:618px">2000000</div>
<div class="t r" style="left:1697px;width:70px;top:618px">36000</div>
<div class="t r" style="left:1770px;width:70px;top:618px">0</div>
<div class="tri" style="left:65px;top:617px"></div>
<div class="tri" style="left:172px;top:617px"></div>
<div class="t r" style="left:26px;width:36px;top:637px">28</div>
<div class="t" style="left:67px;top:637px">100028</div>
<div class="t" style="left:174px;top:637px">1004</div>
<div class="t" style="left:281px;top:637px">2023-01-13</div>
<div class="t r" style="left:540px;width:124px;top:637px">12</div>
<div class="t r" style="left:667px;width:137px;top:637px">2400000</div>
<div class="t r" style="left:807px;width:104px;top:637px">12</div>
<div class="t r" style="left:914px;width:171px;top:637px">6</div>
<div class="t r" style="left:1088px;width:204px;top:637px">400000</div>
<div class="t r" style="left:1295px;width:245px;top:637px">5</div>
<div class="t r" style="left:1543px;width:151px;top:637px">2000000</div>
<div class="t r" style="left:1697px;width:70px;top:637px">36000</div>
<div class="t r" style="left:1770px;width:70px;top:637px">0</div>
<div class="tri" style="left:65px;top:636px"></div>
<div class="tri" style="left:172px;top:636px"></div>
<div class="t r" style="left:26px;width:36px;top:656px">29</div>
<div class="t" style="left:67px;top:656px">100029</div>
<div class="t" style="left:174px;top:656px">1004</div>
<div class="t" style="left:281px;top:656px">2023-01-13</div>
<div class="t r" style="left:540px;width:124px;top:656px">16</div>
<div class="t r" style="left:667px;width:137px;top:656px">2400000</div>
<div class="t r" style="left:807px;width:104px;top:656px">12</div>
<div class="t r" style="left:914px;width:171px;top:656px">6</div>
<div class="t r" style="left:1088px;width:204px;top:656px">400000</div>
<div class="t r" style="left:1295px;width:245px;top:656px">5</div>
<div class="t r" style="left:1543px;width:151px;top:656px">2000000</div>
<div class="t r" style="left:1697px;width:70px;top:656px">36000</div>
<div class="t r" style="left:1770px;width:70px;top:656px">0</div>
<div class="tri" style="left:65px;top:655px"></div>
<div class="tri" style="left:172px;top:655px"></div>
<div class="t r" style="left:26px;width:36px;top:675px">30</div>
<div class="t" style="left:67px;top:675px">100030</div>
<div class="t" style="left:174px;top:675px">1004</div>
<div class="t" style="left:281px;top:675px">2023-01-13</div>
<div class="t r" style="left:540px;width:124px;top:675px">18</div>
<div class="t r" style="left:667px;width:137px;top:675px">2400000</div>
<div class="t r" style="left:807px;width:104px;top:675px">12</div>
<div class="t r" style="left:914px;width:171px;top:675px">6</div>
<div class="t r" style="left:1088px;width:204px;top:675px">400000</div>
<div class="t r" style="left:1295px;width:245px;top:675px">5</div>
<div class="t r" style="left:1543px;width:151px;top:675px">2000000</div>
<div class="t r" style="left:1697px;width:70px;top:675px">36000</div>
<div class="t r" style="left:1770px;width:70px;top:675px">0</div>
<div class="tri" style="left:65px;top:674px"></div>
<div class="tri" style="left:172px;top:674px"></div>
<div class="t r" style="left:26px;width:36px;top:694px">31</div>
<div class="t" style="left:67px;top:694px">100031</div>
<div class="t" style="left:174px;top:694px">1004</div>
<div class="t" style="left:281px;top:694px">2023-01-13</div>
<div class="t r" style="left:540px;width:124px;top:694px">15</div>
<div class="t r" style="left:667px;width:137px;top:694px">2400000</div>
<div class="t r" style="left:807px;width:104px;top:694px">12</div>
<div class="t r" style="left:914px;width:171px;top:694px">6</div>
<div class="t r" style="left:1088px;width:204px;top:694px">400000</div>
<div class="t r" style="left:1295px;width:245px;top:694px">5</div>
<div class="t r" style="left:1543px;width:151px;top:694px">2000000</div>
<div class="t r" style="left:1697px;width:70px;top:694px">36000</div>
<div class="t r" style="left:1770px;width:70px;top:694px">0</div>
<div class="tri" style="left:65px;top:693px"></div>
<div class="tri" style="left:172px;top:693px"></div>
<div class="t r" style="left:26px;width:36px;top:713px">32</div>
<div class="t" style="left:67px;top:713px">100032</div>
<div class="t" style="left:174px;top:713px">1004</div>
<div class="t" style="left:281px;top:713px">2023-01-13</div>
<div class="t r" style="left:540px;width:124px;top:713px">13</div>
<div class="t r" style="left:667px;width:137px;top:713px">2400000</div>
<div class="t r" style="left:807px;width:104px;top:713px">12</div>
<div class="t r" style="left:914px;width:171px;top:713px">6</div>
<div class="t r" style="left:1088px;width:204px;top:713px">400000</div>
<div class="t r" style="left:1295px;width:245px;top:713px">5</div>
<div class="t r" style="left:1543px;width:151px;top:713px">2000000</div>
<div class="t r" style="left:1697px;width:70px;top:713px">36000</div>
<div class="t r" style="left:1770px;width:70px;top:713px">0</div>
<div class="tri" style="left:65px;top:712px"></div>
<div class="tri" style="left:172px;top:712px"></div>
<div class="t r" style="left:26px;width:36px;top:732px">33</div>
<div class="t" style="left:67px;top:732px">100033</div>
<div class="t" style="left:174px;top:732px">1004</div>
<div class="t" style="left:281px;top:732px">2023-01-13</div>
<div class="t r" style="left:540px;width:124px;top:732px">9</div>
<div class="t r" style="left:667px;width:137px;top:732px">2400000</div>
<div class="t r" style="left:807px;width:104px;top:732px">12</div>
<div class="t r" style="left:914px;width:171px;top:732px">6</div>
<div class="t r" style="left:1088px;width:204px;top:732px">400000</div>
<div class="t r" style="left:1295px;width:245px;top:732px">5</div>
<div class="t r" style="left:1543px;width:151px;top:732px">2000000</div>
<div class="t r" style="left:1697px;width:70px;top:732px">36000</div>
<div class="t r" style="left:1770px;width:70px;top:732px">0</div>
<div class="tri" style="left:65px;top:731px"></div>
<div class="tri" style="left:172px;top:731px"></div>
<div class="t r" style="left:26px;width:36px;top:751px">34</div>
<div class="t" style="left:67px;top:751px">100034</div>
<div class="t" style="left:174px;top:751px">1004</div>
<div class="t" style="left:281px;top:751px">2023-01-13</div>
<div class="t r" style="left:540px;width:124px;top:751px">16</div>
<div class="t r" style="left:667px;width:137px;top:751px">2400000</div>
<div class="t r" style="left:807px;width:104px;top:751px">12</div>
<div class="t r" style="left:914px;width:171px;top:751px">6</div>
<div class="t r" style="left:1088px;width:204px;top:751px">400000</div>
<div class="t r" style="left:1295px;width:245px;top:751px">5</div>
<div class="t r" style="left:1543px;width:151px;top:751px">2000000</div>
<div class="t r" style="left:1697px;width:70px;top:751px">36000</div>
<div class="t r" style="left:1770px;width:70px;top:751px">0</div>
<div class="tri" style="left:65px;top:750px"></div>
<div class="tri" style="left:172px;top:750px"></div>
<div class="t r" style="left:26px;width:36px;top:770px">35</div>
<div class="t" style="left:67px;top:770px">100035</div>
<div class="t" style="left:174px;top:770px">1004</div>
<div class="t" style="left:281px;top:770px">2023-01-13</div>
<div class="t r" style="left:540px;width:124px;top:770px">7</div>
<div class="t r" style="left:667px;width:137px;top:770px">2400000</div>
<div class="t r" style="left:807px;width:104px;top:770px">12</div>
<div class="t r" style="left:914px;width:171px;top:770px">6</div>
<div class="t r" style="left:1088px;width:204px;top:770px">400000</div>
<div class="t r" style="left:1295px;width:245px;top:770px">5</div>
<div class="t r" style="left:1543px;width:151px;top:770px">2000000</div>
<div class="t r" style="left:1697px;width:70px;top:770px">36000</div>
<div class="t r" style="left:1770px;width:70px;top:770px">0</div>
<div class="tri" style="left:65px;top:769px"></div>
<div class="tri" style="left:172px;top:769px"></div>
<div class="t r" style="left:26px;width:36px;top:789px">36</div>
<div class="t" style="left:67px;top:789px">100036</div>
<div class="t" style="left:174px;top:789px">1004</div>
<div class="t" style="left:281px;top:789px">2023-01-13</div>
<div class="t r" style="left:540px;width:124px;top:789px">14</div>
<div class="t r" style="left:667px;width:137px;top:789px">2400000</div>
<div class="t r" style="left:807px;width:104px;top:789px">12</div>
<div class="t r" style="left:914px;width:171px;top:789px">6</div>
<div class="t r" style="left:1088px;width:204px;top:789px">400000</div>
<div class="t r" style="left:1295px;width:245px;top:789px">5</div>
<div class="t r" style="left:1543px;width:151px;top:789px">2000000</div>
<div class="t r" style="left:1697px;width:70px;top:789px">36000</div>
<div class="t r" style="left:1770px;width:70px;top:789px">0</div>
<div class="tri" style="left:65px;top:788px"></div>
<div class="tri" style="left:172px;top:788px"></div>
<div class="t r" style="left:26px;width:36px;top:808px">37</div>
<div class="t" style="left:67px;top:808px">100037</div>
<div class="t" style="left:174px;top:808px">1004</div>
<div class="t" style="left:281px;top:808px">2023-01-13</div>
<div class="t r" style="left:540px;width:124px;top:808px">19</div>
<div class="t r" style="left:667px;width:137px;top:808px">2400000</div>
<div class="t r" style="left:807px;width:104px;top:808px">12</div>
<div class="t r" style="left:914px;width:171px;top:808px">6</div>
<div class="t r" style="left:1088px;width:204px;top:808px">400000</div>
<div class="t r" style="left:1295px;width:245px;top:808px">5</div>
<div class="t r" style="left:1543px;width:151px;top:808px">2000000</div>
<div class="t r" style="left:1697px;width:70px;top:808px">36000</div>
<div class="t r" style="left:1770px;width:70px;top:808px">0</div>
<div class="tri" style="left:65px;top:807px"></div>
<div class="tri" style="left:172px;top:807px"></div>
<div class="t" style="left:1599px;top:782px;font-size:20px;line-height:24px;height:24px;color:rgba(125,125,125,0.45)">Activate Windows</div>
<div class="t" style="left:1599px;top:807px;font-size:14px;line-height:18px;height:18px;color:rgba(125,125,125,0.45);transform:scaleX(1.06);transform-origin:0 0">Go to Settings to activate Windows.</div>
</body></html>
